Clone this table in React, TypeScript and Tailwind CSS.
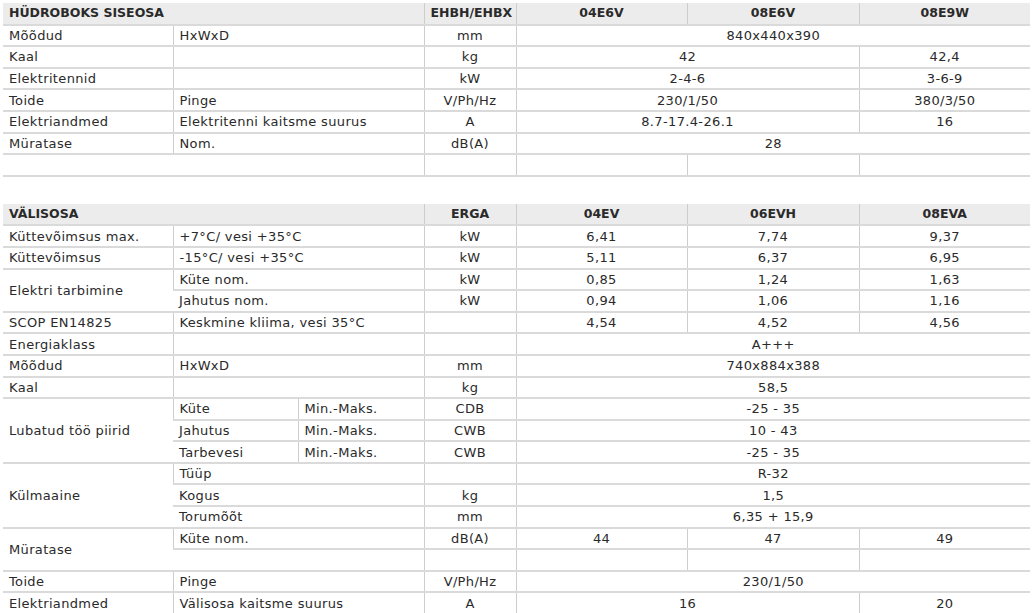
import React from 'react';

type Cell = {
    text?: string;
    span?: number;
    rows?: number;
    left?: boolean;
};

const td = 'h-[21.6px] px-[6px] py-0 border-b-2 border-b-[#dadada] border-l border-l-[#cdcdcd] first:border-l-0 whitespace-nowrap align-middle';

function Row({ cells }: { cells: Cell[] }) {
    return (
        <tr>
            {cells.map((c, i) => (
                <td
                    key={i}
                    colSpan={c.span}
                    rowSpan={c.rows}
                    className={`${td} ${c.left ? 'text-left' : 'text-center'}`}
                >
                    {c.text}
                </td>
            ))}
        </tr>
    );
}

function Header({ title, unit, models, span }: { title: string; unit: string; models: string[]; span: number }) {
    return (
        <tr className="bg-[#ececec] font-bold text-[12.5px] tracking-normal">
            <td colSpan={span} className={`${td} text-left`}>{title}</td>
            <td className={`${td} text-center`}>{unit}</td>
            {models.map(m => (
                <td key={m} className={`${td} text-center`}>{m}</td>
            ))}
        </tr>
    );
}

function Cols({ split }: { split?: boolean }) {
    return (
        <colgroup>
            <col className="w-[170px]" />
            {split ? (
                <>
                    <col className="w-[125px]" />
                    <col className="w-[126px]" />
                </>
            ) : (
                <col className="w-[251px]" />
            )}
            <col className="w-[92px]" />
            <col className="w-[171px]" />
            <col className="w-[172px]" />
            <col className="w-[171px]" />
        </colgroup>
    );
}

const L = (text = '', span?: number, rows?: number): Cell => ({ text, span, rows, left: true });
const C = (text = '', span?: number, rows?: number): Cell => ({ text, span, rows });

const inner: Cell[][] = [
    [L('Mõõdud'), L('HxWxD'), C('mm'), C('840x440x390', 3)],
    [L('Kaal'), L(), C('kg'), C('42', 2), C('42,4')],
    [L('Elektritennid'), L(), C('kW'), C('2-4-6', 2), C('3-6-9')],
    [L('Toide'), L('Pinge'), C('V/Ph/Hz'), C('230/1/50', 2), C('380/3/50')],
    [L('Elektriandmed'), L('Elektritenni kaitsme suurus'), C('A'), C('8.7-17.4-26.1', 2), C('16')],
    [L('Müratase'), L('Nom.'), C('dB(A)'), C('28', 3)],
    [L('', 2), C(), C(), C(), C()],
];

const outer: Cell[][] = [
    [L('Küttevõimsus max.'), L('+7°C/ vesi +35°C', 2), C('kW'), C('6,41'), C('7,74'), C('9,37')],
    [L('Küttevõimsus'), L('-15°C/ vesi +35°C', 2), C('kW'), C('5,11'), C('6,37'), C('6,95')],
    [L('Elektri tarbimine', 1, 2), L('Küte nom.', 2), C('kW'), C('0,85'), C('1,24'), C('1,63')],
    [L('Jahutus nom.', 2), C('kW'), C('0,94'), C('1,06'), C('1,16')],
    [L('SCOP EN14825'), L('Keskmine kliima, vesi 35°C', 2), C(), C('4,54'), C('4,52'), C('4,56')],
    [L('Energiaklass'), L('', 2), C(), C('A+++', 3)],
    [L('Mõõdud'), L('HxWxD', 2), C('mm'), C('740x884x388', 3)],
    [L('Kaal'), L('', 2), C('kg'), C('58,5', 3)],
    [L('Lubatud töö piirid', 1, 3), L('Küte'), L('Min.-Maks.'), C('CDB'), C('-25 - 35', 3)],
    [L('Jahutus'), L('Min.-Maks.'), C('CWB'), C('10 - 43', 3)],
    [L('Tarbevesi'), L('Min.-Maks.'), C('CWB'), C('-25 - 35', 3)],
    [L('Külmaaine', 1, 3), L('Tüüp', 2), C(), C('R-32', 3)],
    [L('Kogus', 2), C('kg'), C('1,5', 3)],
    [L('Torumõõt', 2), C('mm'), C('6,35 + 15,9', 3)],
    [L('Müratase', 1, 2), L('Küte nom.', 2), C('dB(A)'), C('44'), C('47'), C('49')],
    [L('', 2), C(), C(), C(), C()],
    [L('Toide'), L('Pinge', 2), C('V/Ph/Hz'), C('230/1/50', 3)],
    [L('Elektriandmed'), L('Välisosa kaitsme suurus', 2), C('A'), C('16', 2), C('20')],
];

export default function App() {
    return (
        <div
            className="w-[1032px] h-[613px] overflow-hidden bg-white pl-[3px] pr-[2px] pt-[3px] text-[13px] tracking-[0.35px] text-[#2a2a2a] leading-none"
            style={{ fontFamily: '"DejaVu Sans", Verdana, sans-serif' }}
        >
            <table className="w-[1027px] table-fixed border-collapse">
                <Cols />
                <tbody>
                    <Header title="HÜDROBOKS SISEOSA" unit="EHBH/EHBX" models={['04E6V', '08E6V', '08E9W']} span={2} />
                    {inner.map((r, i) => <Row key={i} cells={r} />)}
                </tbody>
            </table>
            <table className="mt-[27px] w-[1027px] table-fixed border-collapse">
                <Cols split />
                <tbody>
                    <Header title="VÄLISOSA" unit="ERGA" models={['04EV', '06EVH', '08EVA']} span={3} />
                    {outer.map((r, i) => <Row key={i} cells={r} />)}
                </tbody>
            </table>
        </div>
    );
}
